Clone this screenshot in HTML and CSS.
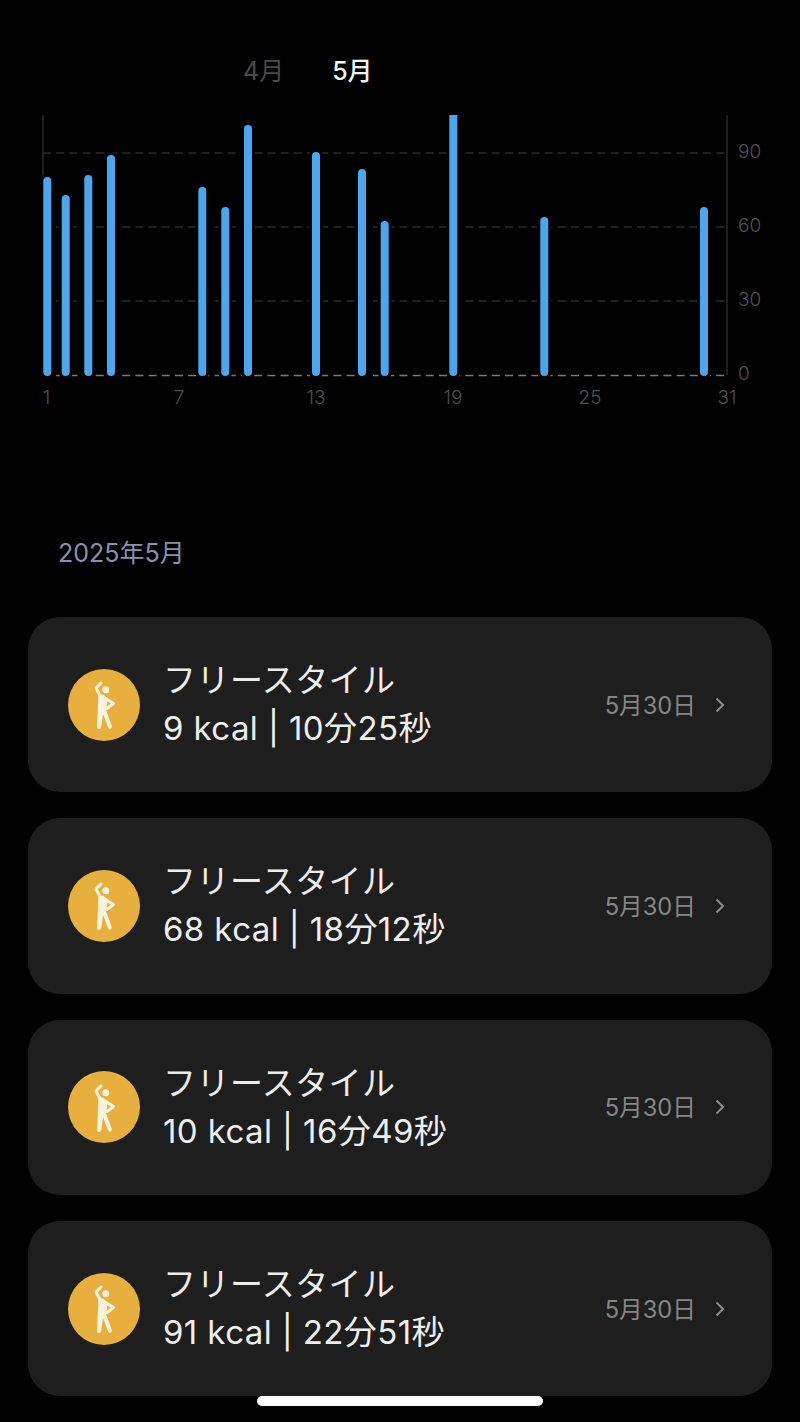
FILE: index.html
```html
<!DOCTYPE html>
<html lang="ja">
<head>
<meta charset="utf-8">
<title>フリースタイル</title>
<link rel="stylesheet" href="styles.css">
</head>
<body>
<svg width="0" height="0" class="defs">
  <symbol id="person" viewBox="0 0 40 60">
    <circle cx="21.8" cy="15.8" r="3.5" class="p-fill"/>
    <path class="p-thin" d="M17 9 L12 14 L16.5 22.5"/>
    <path class="p-thin" d="M20 23.5 L29.5 29.5 L23 34.5"/>
    <path class="p-fill" d="M14.5 21.5 Q18 19.5 21 22 L23.5 27 L22 36 L27.8 52 Q28.2 54.5 26 54.8 Q24.5 55 24 53 L19 40 L17.3 53 Q17 55 15 55 Q13 55 13 53 Z"/>
  </symbol>
</svg>
<main class="page">
  <nav class="tabs">
    <span class="tab">4月</span>
    <span class="tab tab-active">5月</span>
  </nav>
  <section class="chart">
    <svg class="chart-svg" width="800" height="310" viewBox="0 100 800 310">
      <line class="axis" x1="43" y1="115" x2="43" y2="178"/>
      <line class="axis" x1="727" y1="115" x2="727" y2="375"/>
      <line class="grid" x1="43" y1="153" x2="727" y2="153"/>
      <line class="grid" x1="43" y1="227" x2="727" y2="227"/>
      <line class="grid" x1="43" y1="301" x2="727" y2="301"/>
      <line class="base" x1="43" y1="375.5" x2="727" y2="375.5"/>
      <g class="bars">
        <rect x="43.3" y="177" width="8" height="199" rx="4"/>
        <rect x="61.7" y="195" width="8" height="181" rx="4"/>
        <rect x="84.3" y="175" width="8" height="201" rx="4"/>
        <rect x="107" y="155" width="8" height="221" rx="4"/>
        <rect x="198.3" y="187" width="8" height="189" rx="4"/>
        <rect x="221.3" y="207" width="8" height="169" rx="4"/>
        <rect x="244" y="125" width="8" height="251" rx="4"/>
        <rect x="312" y="152" width="8" height="224" rx="4"/>
        <rect x="358" y="169" width="8" height="207" rx="4"/>
        <rect x="380.7" y="221" width="8" height="155" rx="4"/>
        <path d="M449.3 115 H457.3 V372 A4 4 0 0 1 449.3 372 Z"/>
        <rect x="540.3" y="217" width="8" height="159" rx="4"/>
        <rect x="700" y="207" width="8" height="169" rx="4"/>
      </g>
      <g class="labels">
        <text x="738" y="158">90</text>
        <text x="738" y="232">60</text>
        <text x="738" y="306">30</text>
        <text x="738" y="380">0</text>
        <text x="46.5" y="404" class="mid">1</text>
        <text x="179" y="404" class="mid">7</text>
        <text x="316" y="404" class="mid">13</text>
        <text x="453" y="404" class="mid">19</text>
        <text x="590" y="404" class="mid">25</text>
        <text x="727" y="404" class="mid">31</text>
      </g>
    </svg>
  </section>
  <h2 class="month">2025年5月</h2>
  <ul class="list">
    <li class="card">
      <span class="badge"><svg class="person" width="40" height="60"><use href="#person"/></svg></span>
      <div class="info"><div class="title">フリースタイル</div><div class="stats">9 kcal | 10分25秒</div></div>
      <span class="date">5月30日</span>
      <svg class="chev" width="12" height="18" viewBox="0 0 12 18"><path d="M2.5 2.5 L9 9 L2.5 15.5"/></svg>
    </li>
    <li class="card">
      <span class="badge"><svg class="person" width="40" height="60"><use href="#person"/></svg></span>
      <div class="info"><div class="title">フリースタイル</div><div class="stats">68 kcal | 18分12秒</div></div>
      <span class="date">5月30日</span>
      <svg class="chev" width="12" height="18" viewBox="0 0 12 18"><path d="M2.5 2.5 L9 9 L2.5 15.5"/></svg>
    </li>
    <li class="card">
      <span class="badge"><svg class="person" width="40" height="60"><use href="#person"/></svg></span>
      <div class="info"><div class="title">フリースタイル</div><div class="stats">10 kcal | 16分49秒</div></div>
      <span class="date">5月30日</span>
      <svg class="chev" width="12" height="18" viewBox="0 0 12 18"><path d="M2.5 2.5 L9 9 L2.5 15.5"/></svg>
    </li>
    <li class="card">
      <span class="badge"><svg class="person" width="40" height="60"><use href="#person"/></svg></span>
      <div class="info"><div class="title">フリースタイル</div><div class="stats">91 kcal | 22分51秒</div></div>
      <span class="date">5月30日</span>
      <svg class="chev" width="12" height="18" viewBox="0 0 12 18"><path d="M2.5 2.5 L9 9 L2.5 15.5"/></svg>
    </li>
  </ul>
  <div class="home-bar"></div>
</main>
</body>
</html>
```
FILE: styles.css
```css
* { box-sizing: border-box; }
html, body { margin: 0; padding: 0; background: #000; }
body {
  width: 800px;
  height: 1422px;
  overflow: hidden;
  font-family: Inter, "Noto Sans CJK JP", sans-serif;
  color: #f2f2f2;
}
.defs { position: absolute; }
.page { position: relative; height: 1422px; display: flex; flex-direction: column; }
.tabs {
  display: flex;
  gap: 48px;
  padding: 55px 0 0 243px;
  height: 100px;
  font-size: 25px;
  line-height: 32px;
}
.tab { color: #4a4a4a; }
.tab-active { color: #f5f5f5; font-weight: 500; }
.chart { height: 310px; }
.chart-svg { display: block; }
.axis { stroke: #2a2a2a; stroke-width: 1.5; }
.grid { stroke: #2b2b2b; stroke-width: 1.5; stroke-dasharray: 8 5.2; }
.base { stroke: #7a7a7a; stroke-width: 1.5; stroke-dasharray: 8 5.2; }
.bars { fill: #4ba6ee; stroke: #000; stroke-width: 6; paint-order: stroke; }
.labels { fill: #505050; font-size: 19px; font-weight: 300; font-family: Inter, sans-serif; }
.mid { text-anchor: middle; }
.month {
  margin: 0;
  padding: 127px 0 0 58px;
  font-size: 25px;
  line-height: 32px;
  font-weight: 400;
  color: #8b8fae;
}
.list {
  list-style: none;
  margin: 0;
  padding: 48px 28px 0;
  display: flex;
  flex-direction: column;
  gap: 26px;
}
.card {
  height: 175.3px;
  border-radius: 32px;
  background: #1e1e1e;
  display: flex;
  align-items: center;
  padding: 0 46px 0 40px;
}
.badge {
  width: 72px;
  height: 72px;
  border-radius: 50%;
  background: #e7b03e;
  display: flex;
  align-items: center;
  justify-content: center;
  flex: none;
}
.person { display: block; margin-top: -1px; }
.p-fill { fill: #fbf3df; }
.p-thin { fill: none; stroke: #fbf3df; stroke-width: 3; stroke-linecap: round; stroke-linejoin: round; }
.info { margin-left: 23px; flex: 1; margin-top: -1px; }
.title { font-size: 33px; letter-spacing: 0.45px; line-height: 50px; color: #ececec; }
.stats { font-size: 33px; letter-spacing: 0.4px; line-height: 50px; margin-top: -2px; color: #eeeeee; }
.date { font-size: 23.7px; color: #858585; margin-right: 18px; margin-top: -2px; }
.chev { fill: none; stroke: #8c8c8c; stroke-width: 2; flex: none; }
.home-bar {
  position: absolute;
  left: 257px;
  top: 1396px;
  width: 286px;
  height: 10px;
  border-radius: 5px;
  background: #fff;
}
```
